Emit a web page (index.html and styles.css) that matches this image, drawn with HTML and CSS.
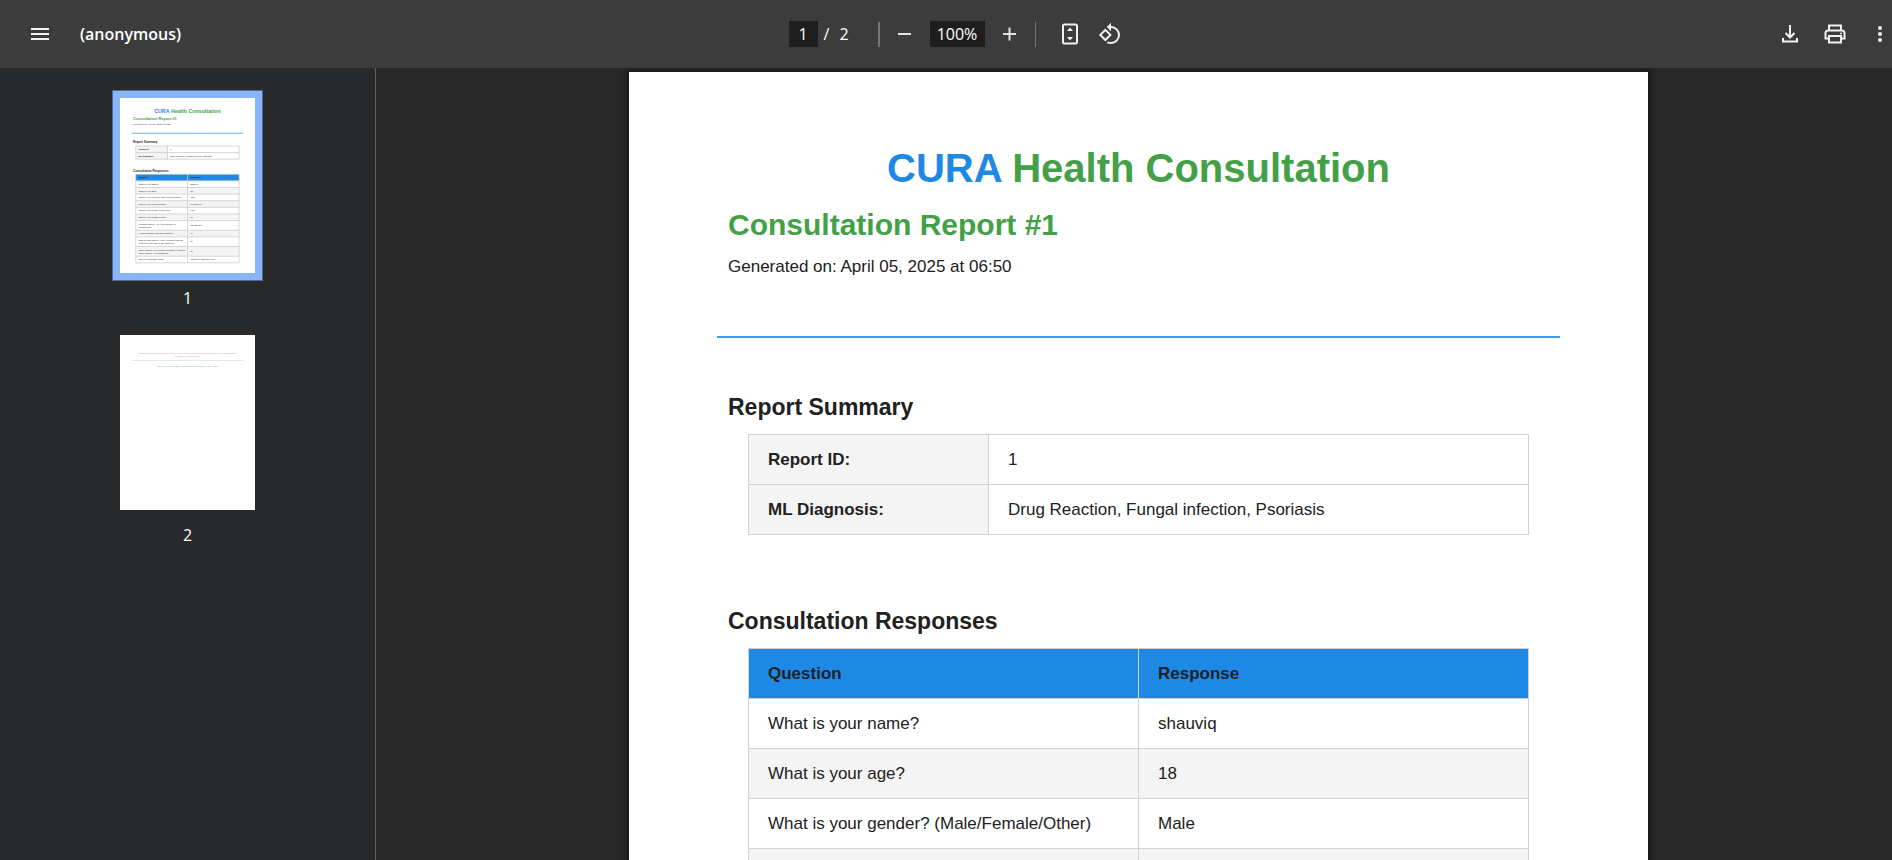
FILE: index.html
```html
<!DOCTYPE html>
<html lang="en">
<head>
<meta charset="utf-8">
<title>(anonymous)</title>
<link rel="stylesheet" href="styles.css">
</head>
<body>
<header class="toolbar">
  <div class="toolbar-start">
    <button class="icon-button" type="button" aria-label="Menu">
      <svg width="20" height="14" viewBox="0 0 20 14"><path d="M1 2h18M1 7h18M1 12h18" stroke="#f1f1f1" stroke-width="2"/></svg>
    </button>
    <h1 class="file-name">(anonymous)</h1>
  </div>
  <div class="toolbar-center">
    <input class="field page-field" type="text" value="1" aria-label="Page number">
    <span class="page-total"><span>/</span><span>2</span></span>
    <span class="divider divider-wide"></span>
    <button class="zoom-button" type="button" aria-label="Zoom out">
      <svg width="14" height="14" viewBox="0 0 14 14"><path d="M0 7h13" stroke="#e2e2e2" stroke-width="2"/></svg>
    </button>
    <input class="field zoom-field" type="text" value="100%" aria-label="Zoom level">
    <button class="zoom-button" type="button" aria-label="Zoom in">
      <svg width="14" height="14" viewBox="0 0 14 14"><path d="M0 7h13M6.500 .5v13" stroke="#e2e2e2" stroke-width="2"/></svg>
    </button>
    <span class="divider"></span>
    <div class="view-tools">
      <button class="icon-button" type="button" aria-label="Fit to page">
        <svg width="16" height="22" viewBox="0 0 16 22"><rect x="1" y="1.5" width="14" height="19" rx="1.5" fill="none" stroke="#f1f1f1" stroke-width="2"/><path d="M8 4.5l3 3.5H5zM8 17.500l3-3.500H5z" fill="#f1f1f1"/></svg>
      </button>
      <button class="icon-button" type="button" aria-label="Rotate counterclockwise">
        <svg width="24" height="24" viewBox="0 0 24 24"><path fill="#f1f1f1" d="M7.340 6.410L.86 12.900l6.490 6.480 6.490-6.480-6.500-6.490zM3.690 12.900l3.660-3.660L11 12.900l-3.660 3.660-3.650-3.660zm15.670-6.260A8.950 8.950 0 0 0 13 4V.760L8.760 5 13 9.240V6c1.790 0 3.580.680 4.950 2.050a7.007 7.007 0 0 1 0 9.900 6.973 6.973 0 0 1-7.790 1.440l-1.490 1.490C10.020 21.620 11.510 22 13 22c2.300 0 4.610-.880 6.360-2.640a8.980 8.980 0 0 0 0-12.720z"/></svg>
      </button>
    </div>
  </div>
  <div class="toolbar-end">
    <button class="icon-button" type="button" aria-label="Download">
      <svg width="16" height="18" viewBox="0 0 16 18"><path d="M8 0v12M3.500 8l4.500 4.500L12.500 8M1 13v3.500h14V13" fill="none" stroke="#f1f1f1" stroke-width="2"/></svg>
    </button>
    <button class="icon-button" type="button" aria-label="Print">
      <svg width="22" height="20" viewBox="0 0 22 20"><path d="M5 6V1.500h12V6M5 14.500H1.500V9q0-2.500 2.500-2.500h14q2.500 0 2.500 2.500v5.500H17M5 12h12v6.500H5z" fill="none" stroke="#f1f1f1" stroke-width="2"/><circle cx="17" cy="9.500" r="1" fill="#f1f1f1"/></svg>
    </button>
    <button class="more-button" type="button" aria-label="More actions">
      <svg width="6" height="18" viewBox="0 0 6 18"><g fill="#f1f1f1"><circle cx="3" cy="3" r="2"/><circle cx="3" cy="9" r="2"/><circle cx="3" cy="15" r="2"/></g></svg>
    </button>
  </div>
</header>
<div class="viewer">
  <nav class="sidebar" aria-label="Pages">
    <a class="thumb" href="#page-1">
      <span class="thumb-frame thumb-current">
        <svg class="thumb-page" viewBox="0 0 1020 1320">
          <text class="t-title" x="510" y="110" text-anchor="middle"><tspan class="t-blue">CURA</tspan> Health Consultation</text>
          <text class="t-heading t-green" x="99" y="163">Consultation Report #1</text>
          <text x="99" y="200">Generated on: April 05, 2025 at 06:50</text>
          <path d="M88 265h843" stroke="#1e88e5" stroke-width="7" opacity=".7"/>
          <text class="t-section" x="99" y="342">Report Summary</text>
          <path d="M119 361h240v100H119z" fill="#f4f4f4"/>
          <path class="t-grid" d="M119 361h781v100H119zM119 411h781M359 361v100"/>
          <g class="t-bold"><text x="139" y="392">Report ID:</text><text x="139" y="442">ML Diagnosis:</text></g>
          <text x="379" y="392">1</text><text x="379" y="442">Drug Reaction, Fungal infection, Psoriasis</text>
          <text class="t-section" x="99" y="555">Consultation Responses</text>
          <path d="M119 575h781v50H119z" fill="#1e88e5"/>
          <path d="M119 675h781v50H119zM119 775h781v50H119zM119 875h781v50H119zM119 998h781v50H119zM119 1121h781v73H119z" fill="#f4f4f4"/>
          <path class="t-grid" d="M119 575h781v669H119zM510 575v669M119 625h781M119 675h781M119 725h781M119 775h781M119 825h781M119 875h781M119 925h781M119 998h781M119 1048h781M119 1121h781M119 1194h781"/>
          <g class="t-bold"><text x="139" y="606">Question</text><text x="530" y="606">Response</text></g>
          <text x="139" y="656">What is your name?</text><text x="530" y="656">shauviq</text>
          <text x="139" y="706">What is your age?</text><text x="530" y="706">18</text>
          <text x="139" y="756">What is your gender? (Male/Female/Other)</text><text x="530" y="756">Male</text>
          <text x="139" y="806">What is your marital status?</text><text x="530" y="806">not married</text>
          <text x="139" y="856">What is your height (in meters)?</text><text x="530" y="856">1.70</text>
          <text x="139" y="906">What is your weight (in kg)?</text><text x="530" y="906">60</text>
          <text x="139" y="957">Personal history: Are you a smoker or</text><text x="139" y="978">non-smoker?</text><text x="530" y="967">non-smoker</text>
          <text x="139" y="1029">Alcohol/tobacco use and duration?</text><text x="530" y="1029">no</text>
          <text x="139" y="1080">Past medical history: Have you had a similar</text><text x="139" y="1101">problem in the past or any surgery?</text><text x="530" y="1090">no</text>
          <text x="139" y="1153">Family history: Do you have a history of cancer,</text><text x="139" y="1174">kidney stones, or headaches?</text><text x="530" y="1163">no</text>
          <text x="139" y="1225">Current complaints (C/O):</text><text x="530" y="1225">itching on legs and flexor</text>
        </svg>
      </span>
      <span class="thumb-label">1</span>
    </a>
    <a class="thumb" href="#page-2">
      <span class="thumb-frame">
        <svg class="thumb-page" viewBox="0 0 1020 1320">
          <g class="t-note" text-anchor="middle">
            <text x="510" y="143">This report is generated automatically and may require review by a healthcare professional. CURA's ML diagnosis is not</text>
            <text x="510" y="166">a substitute for medical advice.</text>
          </g>
          <path d="M88 191h843" stroke="#e6e6e6" stroke-width="8"/>
          <text class="t-thanks" x="510" y="240" text-anchor="middle">Thank you for using <tspan class="t-bold">CURA</tspan> Health Consultation Platform. Stay healthy!</text>
        </svg>
      </span>
      <span class="thumb-label">2</span>
    </a>
  </nav>
  <main class="stage">
    <article class="page" id="page-1">
      <h2 class="brand"><span class="brand-mark">CURA</span> Health Consultation</h2>
      <h3 class="report-title">Consultation Report #1</h3>
      <p class="generated">Generated on: April 05, 2025 at 06:50</p>
      <hr class="rule">
      <section class="block">
        <h4 class="section-title">Report Summary</h4>
        <table class="grid summary">
          <tr><th scope="row">Report ID:</th><td>1</td></tr>
          <tr><th scope="row">ML Diagnosis:</th><td>Drug Reaction, Fungal infection, Psoriasis</td></tr>
        </table>
      </section>
      <section class="block">
        <h4 class="section-title">Consultation Responses</h4>
        <table class="grid responses">
          <thead><tr><th scope="col">Question</th><th scope="col">Response</th></tr></thead>
          <tbody>
            <tr><td>What is your name?</td><td>shauviq</td></tr>
            <tr><td>What is your age?</td><td>18</td></tr>
            <tr><td>What is your gender? (Male/Female/Other)</td><td>Male</td></tr>
            <tr><td></td><td></td></tr>
          </tbody>
        </table>
      </section>
    </article>
  </main>
</div>
</body>
</html>
```
FILE: styles.css
```css
* { box-sizing: border-box; }

body {
  margin: 0;
  height: 100vh;
  display: flex;
  flex-direction: column;
  overflow: hidden;
  background: #282828;
  color: #fff;
  font: 16px/24px "Open Sans", "Noto Sans", sans-serif;
}

button {
  display: flex;
  align-items: center;
  justify-content: center;
  height: 32px;
  padding: 0;
  border: 0;
  background: none;
}

.toolbar {
  flex: none;
  display: grid;
  grid-template-columns: 1fr auto 1fr;
  align-items: center;
  height: 68px;
  background: #3c3c3c;
}

.toolbar-start,
.toolbar-center,
.toolbar-end,
.view-tools {
  display: flex;
  align-items: center;
}

.toolbar-start { gap: 24px; padding-left: 24px; }
.toolbar-center { padding-left: 22px; }
.toolbar-end { justify-content: flex-end; gap: 13px; }
.view-tools { gap: 8px; margin-left: 18px; }

.icon-button { width: 32px; }
.zoom-button { width: 24px; margin: 0 13px; }
.more-button { width: 24px; margin-left: 4px; }

.file-name { margin: 0; font-size: 16px; font-weight: 600; }

.field {
  height: 26px;
  padding: 0;
  border: 0;
  background: #1e1e1e;
  color: #fff;
  font: inherit;
  text-align: center;
}

.page-field { width: 29px; }
.zoom-field { width: 55px; }

.page-total {
  display: flex;
  gap: 10px;
  width: 60px;
  padding-left: 6px;
}

.divider { width: 1px; height: 25px; background: #757575; }
.divider-wide { width: 2px; }

.viewer { flex: 1; display: flex; min-height: 0; }

.sidebar {
  flex: none;
  display: flex;
  flex-direction: column;
  align-items: center;
  gap: 17px;
  width: 376px;
  padding-top: 22px;
  border-right: 1px solid #5f6062;
  background: #28292b;
}

.thumb {
  display: flex;
  flex-direction: column;
  align-items: center;
  gap: 5px;
  color: #fff;
  text-decoration: none;
}

.thumb-frame { display: flex; padding: 7px; border: 1px solid transparent; }
.thumb-current { border-color: #4f6899; background: #8ab4f8; }
.thumb-label { line-height: 24px; }

.thumb-page {
  width: 135px;
  height: 175px;
  background: #fff;
  font: 17px "Liberation Sans", Arial, sans-serif;
  fill: #212121;
}

.t-title { font-size: 40px; font-weight: 700; fill: #43a047; }
.t-blue { fill: #1e88e5; }
.t-green { fill: #43a047; }
.t-heading { font-size: 30px; font-weight: 700; }
.t-section { font-size: 23px; font-weight: 700; }
.t-bold { font-weight: 700; }
.t-grid { fill: none; stroke: #ccc; stroke-width: 6px; }
.t-note { font-size: 14px; fill: #999; }
.t-thanks { font-size: 15px; fill: #43a047; opacity: .7; }

.stage {
  flex: 1;
  display: flex;
  justify-content: center;
  align-items: flex-start;
  min-width: 0;
  padding: 4px 0 0 9px;
  overflow: hidden;
}

.page {
  width: 100%;
  max-width: 1019px;
  min-height: 1320px;
  padding: 72px 88px;
  background: #fff;
  box-shadow: 0 0 6px 2px #181818;
  color: #212121;
  font: 17px/24px "Liberation Sans", Arial, sans-serif;
}

.brand {
  margin: 0;
  color: #43a047;
  font-size: 40px;
  line-height: 48px;
  text-align: center;
}

.brand-mark { color: #1e88e5; }

.report-title {
  margin: 15px 11px 0;
  color: #43a047;
  font-size: 30px;
  line-height: 36px;
}

.generated { margin: 12px 11px 0; }

.rule {
  height: 2px;
  margin: 57px 0 0;
  border: 0;
  background: #3f98ea;
}

.block { padding: 0 11px; }
.rule + .block { margin-top: 55px; }
.block + .block { margin-top: 72px; }

.section-title { margin: 0 0 12px; font-size: 23px; line-height: 29px; }

.grid {
  width: calc(100% - 40px);
  margin: 0 20px;
  border-collapse: collapse;
  table-layout: fixed;
}

.grid th,
.grid td {
  height: 50px;
  padding: 0 19px;
  border: 1px solid #d2d2d2;
  text-align: left;
}

.summary th { width: 240px; background: #f4f4f4; }
.responses thead th { background: #1e88e5; }
.responses tbody tr:nth-child(even) { background: #f4f4f4; }
```
